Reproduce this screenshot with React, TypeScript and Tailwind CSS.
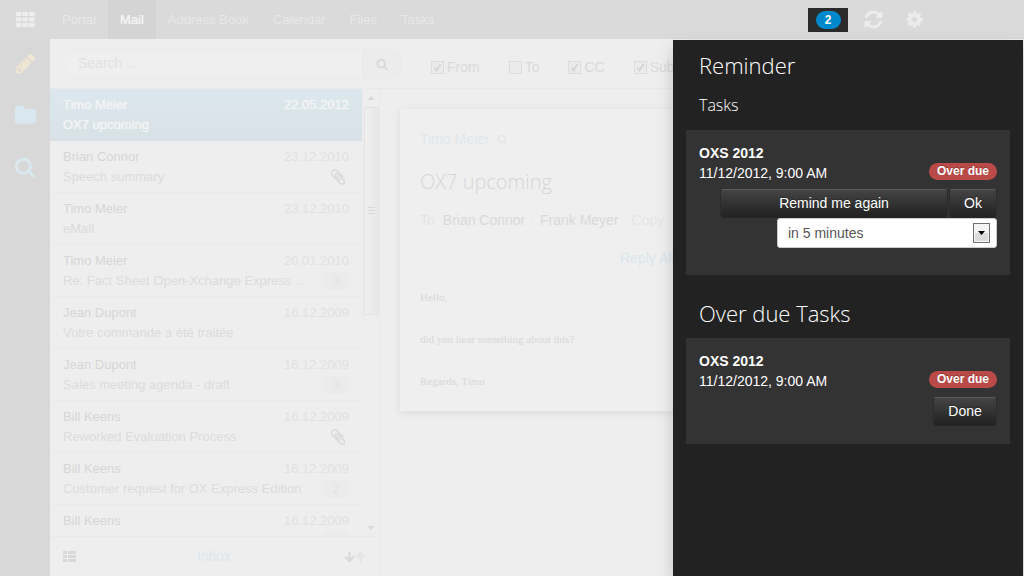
import type { ReactNode } from 'react';

function Icon({ d, className, box = '0 0 1792 1792' }: { d: string; className: string; box?: string }) {
  return (
    <svg viewBox={box} className={className} fill="currentColor" aria-hidden="true">
      <path d={d} />
    </svg>
  );
}

const PENCIL =
  'M491 1536l91-91-235-235-91 91v107h128v128h107zm523-928q0-22-22-22-10 0-17 7l-542 542q-7 7-7 17 0 22 22 22 10 0 17-7l542-542q7-7 7-17zm-54-192l416 416-832 832h-416v-416zm683 96q0 53-37 90l-166 166-416-416 166-165q36-38 90-38 53 0 91 38l235 234q37 39 37 91z';
const FOLDER =
  'M1728 608v704q0 92-66 158t-158 66h-1216q-92 0-158-66t-66-158v-960q0-92 66-158t158-66h320q92 0 158 66t66 158v32h672q92 0 158 66t66 158z';
const SEARCH =
  'M1216 832q0-185-131.5-316.5t-316.5-131.5-316.5 131.5-131.5 316.5 131.5 316.5 316.5 131.5 316.5-131.5 131.5-316.5zm512 832q0 52-38 90t-90 38q-54 0-90-38l-343-342q-179 124-399 124-143 0-273.5-55.5t-225-150-150-225-55.5-273.5 55.5-273.5 150-225 225-150 273.5-55.5 273.5 55.5 225 150 150 225 55.5 273.5q0 220-124 399l343 343q37 37 37 90z';
const REFRESH =
  'M1511 928q0 5-1 7-64 268-268 434.5t-478 166.500q-146 0-282.500-55t-243.500-157l-129 129q-19 19-45 19t-45-19-19-45v-448q0-26 19-45t45-19h448q26 0 45 19t19 45-19 45l-137 137q71 66 161 102t187 36q134 0 250-65t186-179q11-17 53-117 8-23 30-23h192q13 0 22.500 9.500t9.500 22.500zm25-800v448q0 26-19 45t-45 19h-448q-26 0-45-19t-19-45 19-45l138-138q-148-137-349-137-134 0-250 65t-186 179q-11 17-53 117-8 23-30 23h-199q-13 0-22.500-9.500t-9.500-22.500v-7q65-268 270-434.500t480-166.500q146 0 284 55.500t245 156.500l130-129q19-19 45-19t45 19 19 45z';
const COG =
  'M1152 896q0-106-75-181t-181-75-181 75-75 181 75 181 181 75 181-75 75-181zm512-109v222q0 12-8 23t-20 13l-185 28q-19 54-39 91 35 50 107 138 10 12 10 25t-9 23q-27 37-99 108t-94 71q-12 0-26-9l-138-108q-44 23-91 38-16 136-29 186-7 28-36 28h-222q-14 0-24.5-8.5t-11.5-21.5l-28-184q-49-16-90-37l-141 107q-10 9-25 9-14 0-25-11-126-114-165-168-7-10-7-23 0-12 8-23 15-21 51-66.5t54-70.5q-27-50-41-99l-183-27q-13-2-21-12.5t-8-23.5v-222q0-12 8-23t19-13l186-28q14-46 39-92-40-57-107-138-10-12-10-24 0-10 9-23 26-36 98.5-107.5t94.5-71.5q13 0 26 10l138 107q44-23 91-38 16-136 29-186 7-28 36-28h222q14 0 24.5 8.5t11.5 21.5l28 184q49 16 90 37l142-107q9-9 24-9 13 0 25 10 129 119 165 170 7 8 7 22 0 12-8 23-15 21-51 66.5t-54 70.5q26 50 41 98l183 28q13 2 21 12.5t8 23.5z';
const CLIP =
  'M1596 1385q0 117-79 196t-196 79q-135 0-235-100l-777-776q-113-115-113-271 0-159 110-270t269-111q158 0 273 113l605 606q10 10 10 22 0 16-30.5 46.5t-46.5 30.5q-13 0-23-10l-606-607q-79-77-181-77-106 0-179 75t-73 181q0 105 76 181l776 777q63 63 145 63 64 0 106-42t42-106q0-82-63-145l-581-581q-26-24-60-24-29 0-48 19t-19 48q0 32 25 59l410 410q10 10 10 22 0 16-31 47t-47 31q-12 0-22-10l-410-410q-63-61-63-149 0-82 57-139t139-57q88 0 149 63l581 581q100 98 100 235z';

type Mail = { from: string; subject: string; date: string; clip?: boolean; count?: number };

const mails: Mail[] = [
  { from: 'Timo Meier', subject: 'OX7 upcoming', date: '22.05.2012' },
  { from: 'Brian Connor', subject: 'Speech summary', date: '23.12.2010', clip: true },
  { from: 'Timo Meier', subject: 'eMail', date: '23.12.2010' },
  { from: 'Timo Meier', subject: 'Re: Fact Sheet Open-Xchange Express ...', date: '20.01.2010', count: 3 },
  { from: 'Jean Dupont', subject: 'Votre commande a été traitée', date: '16.12.2009' },
  { from: 'Jean Dupont', subject: 'Sales meeting agenda - draft', date: '16.12.2009', count: 3 },
  { from: 'Bill Keens', subject: 'Reworked Evaluation Process', date: '16.12.2009', clip: true },
  { from: 'Bill Keens', subject: 'Customer request for OX Express Edition', date: '16.12.2009', count: 2 },
  { from: 'Bill Keens', subject: 'New marketing brochure', date: '16.12.2009', count: 3 },
];

function MailRow({ mail, selected }: { mail: Mail; selected: boolean }) {
  return (
    <li
      className={
        selected
          ? 'border-b border-[#d6e0e5] bg-linear-to-b from-[#dde8ee] to-[#d7e1e6] px-[13px] pt-[6px] pb-[5px] text-[#f4f4f4] [text-shadow:0_0_1px_#f4f4f4]'
          : 'border-b border-[#eaeaea] px-[13px] pt-[6px] pb-[5px] text-[#dcdcdc]'
      }
    >
      <div className="flex h-5 items-center justify-between">
        <span className={selected ? '' : 'text-[#d6d6d6]'}>{mail.from}</span>
        <span className={selected ? '' : 'text-[#e1e1e1]'}>{mail.date}</span>
      </div>
      <div className="flex h-5 items-center justify-between">
        <span className="truncate">{mail.subject}</span>
        {mail.clip && <Icon d={CLIP} className="mr-[2px] size-[18px] shrink-0 text-[#d6d6d6]" />}
        {mail.count && (
          <span className="h-[18px] w-[26px] shrink-0 rounded-md bg-[#ebebeb] text-center leading-[18px] text-[#e2e2e2]">
            {mail.count}
          </span>
        )}
      </div>
    </li>
  );
}

function Filter({ label, checked }: { label: string; checked: boolean }) {
  return (
    <label className="flex items-center gap-[3px]">
      <span className="grid">
        <input
          type="checkbox"
          defaultChecked={checked}
          className="peer col-start-1 row-start-1 size-[13px] appearance-none border border-[#dcdcdc] bg-[#ebebeb]"
        />
        <svg
          viewBox="0 0 13 13"
          className="pointer-events-none invisible col-start-1 row-start-1 size-[13px] text-[#d4d6da] peer-checked:visible"
          fill="none"
          stroke="currentColor"
          strokeWidth="2"
          aria-hidden="true"
        >
          <path d="M3.5 6.5 5.5 9.5 9.5 3" />
        </svg>
      </span>
      {label}
    </label>
  );
}

function Card({ children }: { children: ReactNode }) {
  return (
    <article className="mx-[13px] bg-[#333] px-[13px] pt-[13px]">
      <h3 className="font-bold leading-5">OXS 2012</h3>
      <div className="flex items-start justify-between">
        <time className="leading-5">11/12/2012, 9:00 AM</time>
        <span className="rounded-full bg-[#b94a48] px-2 text-[12px] font-bold leading-[17px] [text-shadow:0_-1px_0_rgba(0,0,0,0.25)]">
          Over due
        </span>
      </div>
      {children}
    </article>
  );
}

function DarkButton({ children, className }: { children: ReactNode; className: string }) {
  return (
    <button
      type="button"
      className={`h-[29px] rounded-[4px] border border-x-[#2c2c2c] border-t-[#5c5c5c] border-b-[#272727] bg-linear-to-b from-[#444] to-[#222] pb-[2px] text-center leading-5 [text-shadow:0_-1px_0_rgba(0,0,0,0.25)] ${className}`}
    >
      {children}
    </button>
  );
}

const tabs = ['Portal', 'Mail', 'Address Book', 'Calendar', 'Files', 'Tasks'];

export default function App() {
  return (
    <div className="relative flex h-screen flex-col overflow-hidden bg-[#eee] font-['Liberation_Sans',Arial,sans-serif] text-[13px]">
      <header className="flex h-[39px] shrink-0 items-center bg-[#dadada] text-[#e8e8e8]">
        <button type="button" aria-label="Launchpad" className="flex w-[50px] justify-center">
          <svg viewBox="0 0 19 15" className="h-[15px] w-[19px]" fill="#eeeeee" aria-hidden="true">
            {[0, 5.5, 11].map((y) =>
              [0, 6.5, 13].map((x) => <rect key={`${x}-${y}`} x={x} y={y} width="5.5" height="4" />),
            )}
          </svg>
        </button>
        <nav className="flex h-full flex-1">
          {tabs.map((tab) => (
            <a
              key={tab}
              href={`#${tab}`}
              className={
                tab === 'Mail'
                  ? 'flex items-center bg-[#d4d4d4] px-3 text-[#f4f4f4] [text-shadow:0_0_1px_#f4f4f4]'
                  : 'flex items-center px-3'
              }
            >
              {tab}
            </a>
          ))}
        </nav>
        <div className="mr-[100px] flex items-center">
          <button type="button" aria-label="Notifications" className="flex h-6 w-10 items-center justify-center bg-[#2a2a2a]">
            <span className="w-[25px] rounded-full bg-[#0088cc] text-center text-[12px] font-bold leading-[18px] text-white">2</span>
          </button>
          <button type="button" aria-label="Refresh" className="ml-[15px]">
            <Icon d={REFRESH} box="-128 -128 1792 1792" className="size-[21px] text-[#ececec]" />
          </button>
          <button type="button" aria-label="Settings" className="ml-[21px]">
            <Icon d={COG} className="size-[19px] text-[#ececec]" />
          </button>
        </div>
      </header>

      <div className="flex min-h-0 flex-1">
        <aside className="flex w-[50px] shrink-0 flex-col items-center gap-[29px] bg-[#d8d8d8] pt-[13px]">
          <button type="button" aria-label="Compose" className="text-[#efe6d3]">
            <Icon d={PENCIL} className="size-[23px]" />
          </button>
          <button type="button" aria-label="Folders" className="text-[#d9e7ee]">
            <Icon d={FOLDER} className="size-[23px]" />
          </button>
          <button type="button" aria-label="Search" className="text-[#d9e7ee]">
            <Icon d={SEARCH} className="size-[22px]" />
          </button>
        </aside>

        <div className="flex min-w-0 flex-1 flex-col">
          <div className="flex h-[50px] shrink-0 items-center border-b border-[#e9e9e9] pl-[13px] text-[14px] text-[#dadada]">
            <form className="flex h-[30px] w-[340px] shrink-0 overflow-hidden rounded-full border border-[#e9e9e9]">
              <input
                type="search"
                aria-label="Search"
                placeholder="Search ..."
                className="min-w-0 flex-1 bg-[#efefef] px-[14px] outline-none placeholder:text-[#e2e2e2]"
              />
              <button type="button" aria-label="Search mail" className="w-10 border-l border-[#e9e9e9] bg-[#ececec] pl-[13px]">
                <Icon d={SEARCH} className="size-3 text-[#d8d8d8]" />
              </button>
            </form>
            <div className="ml-7 flex gap-[29px] pt-[7px]">
              <Filter label="From" checked />
              <Filter label="To" checked={false} />
              <Filter label="CC" checked />
              <Filter label="Subject" checked />
            </div>
          </div>

          <div className="flex min-h-0 flex-1">
            <section className="flex w-[330px] shrink-0 flex-col border-r border-[#e9e9e9]">
              <div className="flex min-h-0 flex-1">
                <ul className="min-w-0 flex-1 overflow-hidden">
                  {mails.map((mail, i) => (
                    <MailRow key={i} mail={mail} selected={i === 0} />
                  ))}
                </ul>
                <div className="flex w-[17px] flex-col items-center border-l border-[#ebebeb] text-[#d9d9d9]">
                  <svg viewBox="0 0 16 18" className="h-[18px] w-4" fill="currentColor" aria-hidden="true">
                    <path d="M8 7l3.500 4h-7z" />
                  </svg>
                  <div className="flex h-[208px] w-[15px] items-center justify-center rounded-[2px] border border-[#e2e2e2] bg-linear-to-r from-[#f0f0f0] to-[#e7e7e7]">
                    <svg viewBox="0 0 7 8" className="h-2 w-[7px]" stroke="currentColor" aria-hidden="true">
                      <path d="M0 .5h7M0 3.500h7M0 6.500h7" />
                    </svg>
                  </div>
                  <svg viewBox="0 0 16 18" className="mt-auto h-[18px] w-4" fill="currentColor" aria-hidden="true">
                    <path d="M8 12l3.500-4h-7z" />
                  </svg>
                </div>
              </div>
              <footer className="flex h-10 shrink-0 items-center justify-between border-t border-[#e9e9e9] px-[13px]">
                <button type="button" aria-label="View">
                  <svg viewBox="0 0 13 11" className="h-[11px] w-[13px]" fill="#d8d8d8" aria-hidden="true">
                    <path d="M0 0h4v3H0zM5 0h8v3H5zM0 4h4v3H0zM5 4h8v3H5zM0 8h4v3H0zM5 8h8v3H5z" />
                  </svg>
                </button>
                <a href="#inbox" className="pl-2 text-[14px] text-[#dde7ed]">
                  Inbox
                </a>
                <button type="button" aria-label="Sort">
                  <svg viewBox="0 0 22 12" className="h-3 w-[22px]" fill="none" strokeWidth="2" aria-hidden="true">
                    <path d="M5.500 1v9M1 5.500l4.500 4.500 4.500-4.500" stroke="#d8d8d8" />
                    <path d="M16.500 11V2M12 6.500l4.500-4.500 4.500 4.500" stroke="#e3e3e3" />
                  </svg>
                </button>
              </footer>
            </section>

            <main className="min-w-0 flex-1 px-5 pt-5">
              <article className="h-[302px] overflow-hidden bg-[#efefef] px-5 pt-5 text-[14px] leading-5 shadow-[0_2px_8px_rgba(0,0,0,0.08)]">
                <div className="flex items-center gap-[7px] text-[#dfe7ec]">
                  Timo Meier
                  <Icon d={SEARCH} className="size-[11px] text-[#e6e6e6]" />
                </div>
                <h1 className="mt-[18px] font-['Open_Sans',sans-serif] text-[20px] font-light leading-[30px] text-[#d6d6d6]">
                  OX7 upcoming
                </h1>
                <p className="mt-[13px] flex whitespace-nowrap text-[#d9d9d9]">
                  <span className="mr-2 text-[#e5e5e5]">To</span>
                  Brian Connor
                  <span className="mx-[5px] text-[#e5e5e5]">·</span>
                  Frank Meyer
                  <span className="ml-[13px] text-[#e5e5e5]">Copy</span>
                </p>
                <a href="#reply-all" className="mt-[18px] ml-[200px] block text-[#d9e7ee]">
                  Reply All
                </a>
                <div className="mt-[19px] font-['Liberation_Serif',serif] text-[11px] leading-[21px] text-[#d8d8d8]">
                  <p>Hello,</p>
                  <p className="mt-[21px]">did you hear something about this?</p>
                  <p className="mt-[21px]">Regards, Timo</p>
                </div>
              </article>
            </main>
          </div>
        </div>
      </div>

      <section
        aria-label="Notifications"
        className="absolute top-10 right-px bottom-0 w-[350px] bg-[#222] text-[14px] text-white shadow-[0_8px_16px_rgba(0,0,0,0.18)]"
      >
        <h1 className="px-[26px] pt-[5px] font-['Open_Sans',sans-serif] text-[22px] font-light leading-10">Reminder</h1>
        <h2 className="px-[26px] pb-[5px] font-['Open_Sans',sans-serif] text-[16px] font-light leading-10">Tasks</h2>
        <Card>
          <div className="mt-[6px] flex justify-end gap-px">
            <DarkButton className="w-[228px]">Remind me again</DarkButton>
            <DarkButton className="w-12">Ok</DarkButton>
          </div>
          <div className="flex justify-end pb-[27px]">
            <div className="grid w-[220px]">
              <select
                aria-label="Remind me"
                className="col-start-1 row-start-1 h-[30px] appearance-none rounded-[3px] border border-[#ccc] bg-white px-[10px] text-[#555] outline-none"
              >
                <option>in 5 minutes</option>
              </select>
              <svg
                viewBox="0 0 17 20"
                className="pointer-events-none col-start-1 row-start-1 mr-[7px] h-5 w-[17px] self-center justify-self-end"
                aria-hidden="true"
              >
                <rect x=".5" y=".5" width="16" height="19" fill="#f4f4f4" stroke="#707070" />
                <rect x="2" y="10" width="13" height="8" fill="#dcdcdc" />
                <path d="M5 8h7l-3.500 4z" fill="#000" />
              </svg>
            </div>
          </div>
        </Card>
        <h1 className="px-[26px] pt-[18px] pb-[5px] font-['Open_Sans',sans-serif] text-[22px] font-light leading-10">Over due Tasks</h1>
        <Card>
          <div className="mt-[6px] flex justify-end pb-[18px]">
            <DarkButton className="w-16">Done</DarkButton>
          </div>
        </Card>
      </section>
    </div>
  );
}
